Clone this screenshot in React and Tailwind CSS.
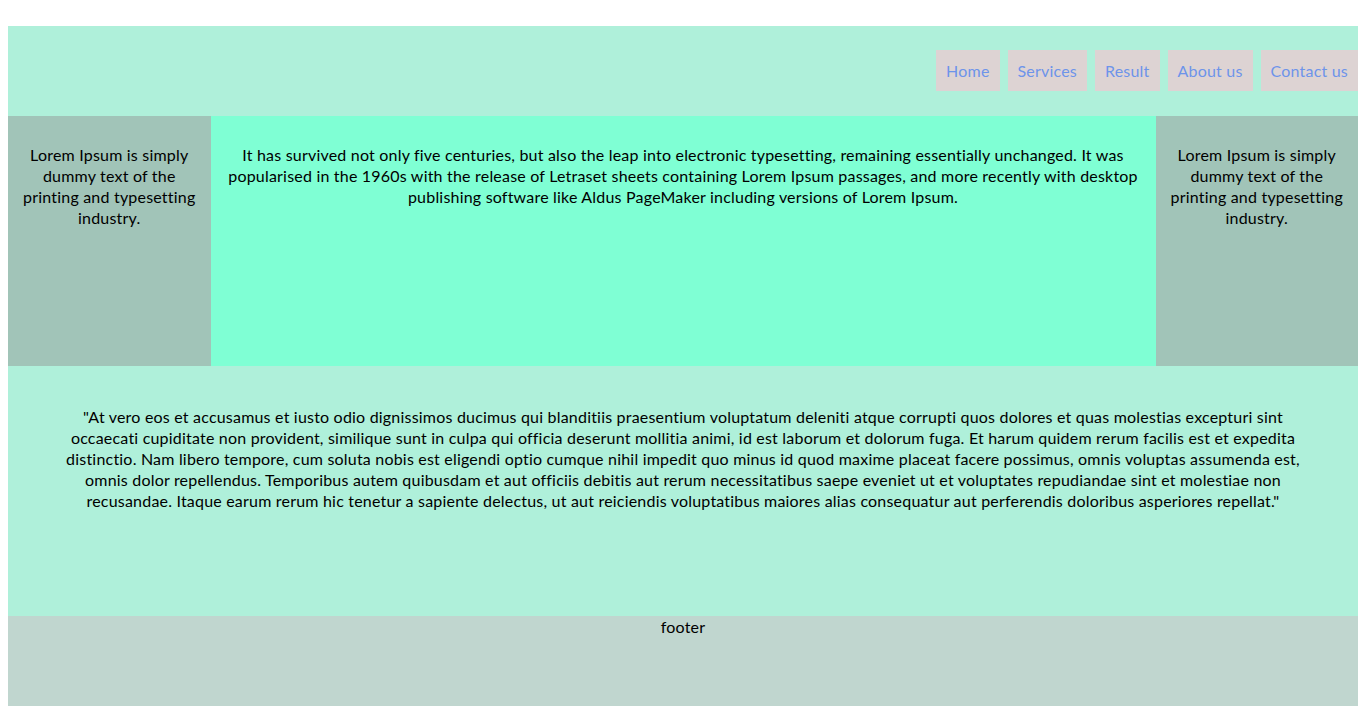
const navItems = ['Home', 'Services', 'Result', 'About us', 'Contact us'];

const sideText = 'Lorem Ipsum is simply dummy text of the printing and typesetting industry.';

export default function App() {
  return (
    <div className="bg-white px-2 pt-[26px] pb-2 font-['Lato',sans-serif] text-[16px] leading-[21px] tracking-[0.2px] text-black">
      <header className="flex h-[90px] justify-end bg-[#aff0da] pt-6">
        <nav className="flex h-[41px] gap-2">
          {navItems.map((item) => (
            <a
              key={item}
              href="#"
              className="flex items-center bg-[#ddd3d3] px-[10px] text-[#6d94ea]"
            >
              {item}
            </a>
          ))}
        </nav>
      </header>

      <div className="grid h-[250px] grid-cols-[15%_70%_15%]">
        <aside className="bg-[#a1c4b8] px-3 pt-[28px] text-center">{sideText}</aside>
        <main className="bg-[#7fffd4] px-[10px] pt-[28px] text-center">
          It has survived not only five centuries, but also the leap into electronic typesetting,
          remaining essentially unchanged. It was popularised in the 1960s with the release of
          Letraset sheets containing Lorem Ipsum passages, and more recently with desktop
          publishing software like Aldus PageMaker including versions of Lorem Ipsum.
        </main>
        <aside className="bg-[#a1c4b8] px-3 pt-[28px] text-center">{sideText}</aside>
      </div>

      <section className="h-[250px] bg-[#aff0da] px-[50px] pt-[40px] text-center">
        "At vero eos et accusamus et iusto odio dignissimos ducimus qui blanditiis praesentium
        voluptatum deleniti atque corrupti quos dolores et quas molestias excepturi sint occaecati
        cupiditate non provident, similique sunt in culpa qui officia deserunt mollitia animi, id est
        laborum et dolorum fuga. Et harum quidem rerum facilis est et expedita distinctio. Nam libero
        tempore, cum soluta nobis est eligendi optio cumque nihil impedit quo minus id quod maxime
        placeat facere possimus, omnis voluptas assumenda est, omnis dolor repellendus. Temporibus
        autem quibusdam et aut officiis debitis aut rerum necessitatibus saepe eveniet ut et
        voluptates repudiandae sint et molestiae non recusandae. Itaque earum rerum hic tenetur a
        sapiente delectus, ut aut reiciendis voluptatibus maiores alias consequatur aut perferendis
        doloribus asperiores repellat."
      </section>

      <footer className="h-[90px] bg-[#c0d6cf] text-center">footer</footer>
    </div>
  );
}
